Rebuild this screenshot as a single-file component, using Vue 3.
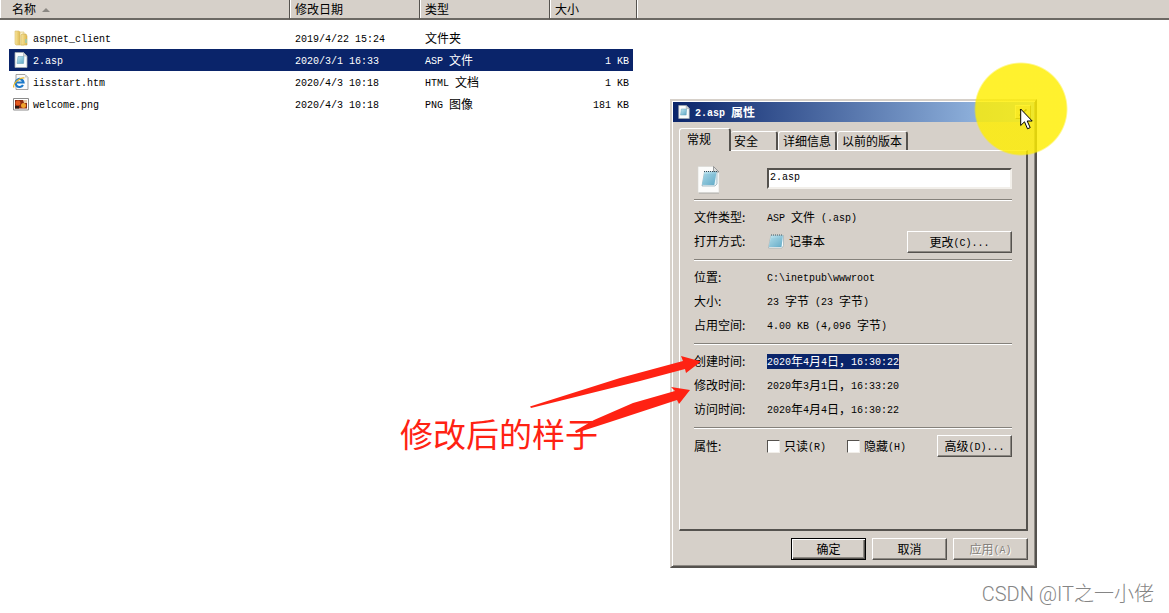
<script setup>
import { h, ref } from 'vue'

// Splits mixed text so Latin runs can be set half as wide as the ideographs.
const Mixed = (props) =>
  h(
    'span',
    { class: 'mixed' },
    (props.text.match(/[\x20-\x7e]+|[^\x20-\x7e]+/g) || []).map((run) =>
      /^[\x20-\x7e]/.test(run) ? h('span', { class: 'latin' }, run) : run
    )
  )
Mixed.props = ['text']

const files = [
  { icon: 'folder', name: 'aspnet_client', date: '2019/4/22 15:24', type: '文件夹', size: '' },
  { icon: 'note', name: '2.asp', date: '2020/3/1 16:33', type: 'ASP 文件', size: '1 KB', selected: true },
  { icon: 'ie', name: 'iisstart.htm', date: '2020/4/3 10:18', type: 'HTML 文档', size: '1 KB' },
  { icon: 'image', name: 'welcome.png', date: '2020/4/3 10:18', type: 'PNG 图像', size: '181 KB' },
]

const tabs = ['常规', '安全', '详细信息', '以前的版本']

const location = [
  ['位置:', 'C:\\inetpub\\wwwroot'],
  ['大小:', '23 字节 (23 字节)'],
  ['占用空间:', '4.00 KB (4,096 字节)'],
]
const times = [
  ['创建时间:', '2020年4月4日，16:30:22', true],
  ['修改时间:', '2020年3月1日，16:33:20'],
  ['访问时间:', '2020年4月4日，16:30:22'],
]

const fileName = ref('2.asp')
const readOnly = ref(false)
const hidden = ref(false)
</script>

<template>
  <main class="desktop">
    <svg class="defs" aria-hidden="true">
      <defs>
        <linearGradient id="pad" x1="0" y1="0" x2="1" y2="1">
          <stop offset="0" stop-color="#c4e8f2" />
          <stop offset="1" stop-color="#5ba6c4" />
        </linearGradient>
        <linearGradient id="gold" x1="0" y1="0" x2="1" y2="0">
          <stop offset="0" stop-color="#f8e6a0" />
          <stop offset="1" stop-color="#dfb94f" />
        </linearGradient>
      </defs>
      <symbol id="folder" viewBox="0 0 16 16">
        <path d="M2 1h4l1 1v13H3l-1-1z" fill="url(#gold)" stroke="#d9bd68" stroke-width=".6" />
        <path d="M7 2h4v13H7z" fill="#fbf3cf" stroke="#d9bd68" stroke-width=".6" />
        <path d="M9 4h4l1 2v9H8V5z" fill="url(#gold)" stroke="#cfae52" stroke-width=".6" />
        <path d="M12 9h2v4h-2z" fill="#a9c9a0" />
      </symbol>
      <symbol id="note" viewBox="0 0 16 16">
        <path d="M2 .5h8.500L14 4v11.500H2z" fill="#fafcfc" stroke="#a5adb0" stroke-width=".8" />
        <path d="M10.500.5V4H14z" fill="#d5dadd" stroke="#9ba3a8" stroke-width=".6" />
        <path d="M5 4.500h6l-.5 7H4z" fill="url(#pad)" stroke="#5f9db5" stroke-width=".5" />
      </symbol>
      <symbol id="ie" viewBox="0 0 16 16">
        <path d="M3 .5h9L15 3.500v12H3z" fill="#fafafa" stroke="#8c8c8c" stroke-width=".8" />
        <path d="M12 .5v3h3z" fill="#ccc" />
        <path d="M10 11A4 4 0 1 1 10.500 8.500H3.500" fill="none" stroke="#1b78c8" stroke-width="2.200" />
        <path d="M1 13.500C-1 10 7 3 11.500 4" fill="none" stroke="#e8b72c" stroke-width="1.200" />
      </symbol>
      <symbol id="image" viewBox="0 0 16 16">
        <path d="M.5 2.500h15v11.500H.5z" fill="#fff" stroke="#8b8b8b" />
        <path d="M2 4h12v8.500H2z" fill="#8e2a10" />
        <circle cx="5" cy="7" r="2.500" fill="#e4581c" />
        <circle cx="10.500" cy="9.500" r="2.500" fill="#f0a32c" />
        <path d="M10 4h4v3h-3z" fill="#e9c8a4" />
        <path d="M2 10h4v2.500H2z" fill="#2d1712" />
      </symbol>
      <symbol id="pad-icon" viewBox="0 0 16 16">
        <path d="M3 2.500h12.500v10L14 15H.5z" fill="#f5fafb" stroke="#8fa5ad" stroke-width=".6" />
        <path d="M3 2.500h12l-1.500 11.500H.8z" fill="url(#pad)" />
        <path d="M3 6h11M2.500 8h11M2 10h11.500M1.500 12H13" stroke="#82bfd2" stroke-width=".5" />
        <path d="M3 2h12" stroke="#3e5a66" stroke-dasharray="1 1" />
      </symbol>
      <symbol id="document" viewBox="0 0 24 28">
        <path d="M2 1h15l5 5v21.500H2z" fill="#a8a8a6" />
        <path d="M1 .5h15.500L22 6v20.500H1z" fill="#fcfcfb" stroke="#d6d6d4" stroke-width=".6" />
        <path d="M16.500.5V6H22z" fill="#dededc" stroke="#77797a" stroke-width=".7" />
        <path d="M7.500 6H20v12l-2 2H5z" fill="#e7f3f7" stroke="#7798a4" stroke-width=".6" />
        <path d="M7.500 6h12l-2.200 13H5z" fill="url(#pad)" />
        <path d="M7 9h12M6.700 11h12M6.300 13h12M6 15h12M5.500 17h12" stroke="#70b6d0" stroke-width=".6" />
        <path d="M7 5.500h13" stroke="#304e5b" stroke-dasharray="1 1" />
      </symbol>
    </svg>

    <table class="files">
      <colgroup>
        <col class="c-name" /><col class="c-mid" /><col class="c-mid" /><col class="c-size" /><col />
      </colgroup>
      <thead>
        <tr>
          <th class="first">名称 <i class="sort"></i></th>
          <th>修改日期</th>
          <th>类型</th>
          <th>大小</th>
          <th class="rest"></th>
        </tr>
      </thead>
      <tbody>
        <tr v-for="f in files" :key="f.name" :class="{ selected: f.selected }">
          <td class="first">
            <div class="cell name">
              <svg class="icon16"><use :href="'#' + f.icon" /></svg>
              <Mixed :text="f.name" />
            </div>
          </td>
          <td><div class="cell"><Mixed :text="f.date" /></div></td>
          <td><div class="cell"><Mixed :text="f.type" /></div></td>
          <td class="last"><div class="cell size"><Mixed :text="f.size" /></div></td>
          <td></td>
        </tr>
      </tbody>
    </table>

    <section class="dialog" role="dialog" aria-label="2.asp 属性">
      <header class="title">
        <svg class="icon14"><use href="#note" /></svg>
        <h1><Mixed text="2.asp 属性" /></h1>
        <button class="close" aria-label="关闭">
          <svg viewBox="0 0 8 7"><path d="M.5.5l7 6M7.500.5l-7 6" stroke="#000" stroke-width="1.500" /></svg>
        </button>
      </header>

      <div class="tabs" role="tablist">
        <button v-for="(t, i) in tabs" :key="t" class="tab" :class="{ active: i === 0 }" role="tab" :aria-selected="i === 0">{{ t }}</button>
      </div>

      <div class="panel">
        <div class="row head">
          <span class="key"><svg class="doc"><use href="#document" /></svg></span>
          <input v-model="fileName" class="field" type="text" aria-label="文件名" />
        </div>
        <hr />
        <div class="row"><span class="key">文件类型:</span><Mixed text="ASP 文件 (.asp)" /></div>
        <div class="row">
          <span class="key">打开方式:</span>
          <svg class="icon16 app"><use href="#pad-icon" /></svg>
          <span>记事本</span>
          <button class="btn change"><Mixed text="更改(C)..." /></button>
        </div>
        <hr />
        <div v-for="[k, v] in location" :key="k" class="row"><span class="key">{{ k }}</span><Mixed :text="v" /></div>
        <hr />
        <div v-for="[k, v, marked] in times" :key="k" class="row">
          <span class="key">{{ k }}</span><Mixed :class="{ marked }" :text="v" />
        </div>
        <hr />
        <div class="row attrs">
          <span class="key">属性:</span>
          <label class="check"><input v-model="readOnly" type="checkbox" /><Mixed text="只读(R)" /></label>
          <label class="check"><input v-model="hidden" type="checkbox" /><Mixed text="隐藏(H)" /></label>
          <button class="btn advanced"><Mixed text="高级(D)..." /></button>
        </div>
      </div>

      <footer class="actions">
        <button class="btn default">确定</button>
        <button class="btn">取消</button>
        <button class="btn" disabled><Mixed text="应用(A)" /></button>
      </footer>
    </section>

    <div class="spot"></div>
    <svg class="pointer" viewBox="0 0 13 22">
      <path d="M.7 1v16.500l3.800-3.700 3 7 2.700-1.200-3-6.600h5z" fill="#fff" stroke="#000" />
    </svg>

    <p class="note">修改后的样子</p>
    <svg class="arrows" viewBox="0 0 172 80">
      <path d="M0 50.500L90 22 153 5l-2-5 20 5.500L156 17l-1-4-45 12L1 52z" />
      <path d="M45 75L64 64l39-17 42-12-4-4 19 3-11 14-2-4-67 22-34 11z" />
    </svg>
    <p class="watermark">CSDN @IT之一小佬</p>
  </main>
</template>

<style>
body {
  background: #fff;
}
.mixed {
  white-space: pre;
}
.latin {
  font-family: "Liberation Mono", monospace;
  font-size: 10px;
  line-height: 12px;
  vertical-align: 1px;
}
</style>

<style scoped>
.desktop {
  position: relative;
  min-height: 100vh;
  overflow: hidden;
  font: 12px/14px "Noto Sans CJK SC", sans-serif;
  color: #000;
}
.defs {
  position: absolute;
  width: 0;
  height: 0;
}
.files {
  width: 100%;
  table-layout: fixed;
  border-collapse: separate;
  border-spacing: 0;
}
.c-name { width: 290px; }
.c-mid { width: 130px; }
.c-size { width: 87px; }
th {
  height: 18px;
  padding: 0 0 0 5px;
  text-align: left;
  font-weight: 400;
  background: #d6d0c9;
  border-right: 1px solid #55524e;
  border-bottom: 2px solid #6c6964;
  box-shadow: inset 1px 0 #fff;
}
th.first { padding-left: 12px; }
th.rest { border-right: 0; }
.sort {
  display: inline-block;
  margin: 0 0 2px 3px;
  border: 4px solid transparent;
  border-top: 0;
  border-bottom-color: #8b8883;
}
td { padding: 0; }
td.first { padding-left: 9px; }
td.last { padding-right: 4px; }
tbody tr:first-child td { padding-top: 7px; }
.cell {
  display: flex;
  align-items: center;
  height: 22px;
  padding-left: 5px;
}
.cell.name {
  gap: 4px;
  padding-left: 4px;
}
.cell.size {
  justify-content: flex-end;
  padding-right: 4px;
}
.selected .cell {
  background: #0a246a;
  color: #fff;
}
.icon16 {
  flex: none;
  width: 16px;
  height: 16px;
}
.icon14 {
  width: 14px;
  height: 14px;
}
.dialog {
  position: absolute;
  left: 670px;
  top: 99px;
  box-sizing: border-box;
  width: 367px;
  padding: 1px 7px 6px 7px;
  background: #d6d0c9;
  border: 2px solid;
  border-color: #d6d0c9 #55524e #55524e #d6d0c9;
  box-shadow: inset 1px 1px #fff, inset -1px -1px #8d8983;
}
.title {
  display: flex;
  align-items: center;
  gap: 4px;
  height: 20px;
  margin: 0 -6px;
  padding: 0 3px 0 4px;
  background: linear-gradient(90deg, #0a246a, #a6caf0);
  color: #fff;
}
.title h1 {
  margin: 0;
  font-size: 12px;
  line-height: 14px;
}
.close {
  display: grid;
  place-items: center;
  width: 16px;
  height: 14px;
  margin-left: auto;
  padding: 0;
  background: #d6d0c9;
  border: 1px solid;
  border-color: #fff #55524e #55524e #fff;
}
.close svg {
  width: 8px;
  height: 7px;
}
.tabs {
  display: flex;
  align-items: flex-end;
  margin-top: 6px;
}
.tab {
  height: 19px;
  padding: 0 4px;
  font: inherit;
  color: inherit;
  background: #d6d0c9;
  border: 1px solid #fff;
  border-right: 2px solid #55524e;
  border-bottom: 0;
  border-radius: 3px 3px 0 0;
}
.tab.active {
  position: relative;
  width: 52px;
  height: 23px;
  margin-bottom: -1px;
  padding: 0 0 2px 7px;
  text-align: left;
}
.tab:nth-child(2) {
  width: 47px;
  padding-left: 3px;
  text-align: left;
  border-left: 0;
}
.panel {
  padding: 15px 14px 70px;
  border: 1px solid #fff;
  border-right: 2px solid #55524e;
  border-bottom: 2px solid #55524e;
}
.row {
  display: flex;
  align-items: center;
  height: 24px;
}
.row.head { height: 27px; }
.key {
  flex: none;
  width: 73px;
}
.doc {
  display: block;
  width: 24px;
  height: 28px;
  margin-left: 3px;
}
.field {
  flex: 1;
  box-sizing: border-box;
  min-width: 0;
  height: 21px;
  margin-bottom: 2px;
  padding: 0 1px 2px;
  font: 10px/14px "Liberation Mono", monospace;
  background: #fff;
  border: 2px solid;
  border-color: #55524e #f2efea #f2efea #55524e;
  border-radius: 0;
  outline: 0;
}
hr {
  height: 0;
  margin: 6px 0 4px;
  border: 0;
  border-top: 1px solid #85817b;
  border-bottom: 1px solid #fff;
}
.app { margin: 0 5px 0 1px; }
.marked {
  line-height: 13px;
  background: #0a246a;
  color: #fff;
}
.btn {
  box-sizing: border-box;
  width: 75px;
  height: 22px;
  padding: 0;
  font: inherit;
  color: inherit;
  background: #d6d0c9;
  border: 1px solid;
  border-color: #fff #55524e #55524e #fff;
  box-shadow: inset -1px -1px #8d8983;
}
.btn.change {
  width: 105px;
  margin-left: auto;
  align-self: flex-end;
}
.btn.advanced { margin-left: auto; }
.btn.default {
  border-color: #000;
  box-shadow: inset 1px 1px #fff, inset -1px -1px #55524e, inset -2px -2px #8d8983;
}
.btn:disabled {
  color: #85817b;
  text-shadow: 1px 1px #fff;
}
.attrs { height: 26px; }
.check {
  display: flex;
  align-items: center;
  gap: 4px;
  width: 80px;
}
.check input {
  appearance: none;
  flex: none;
  box-sizing: border-box;
  width: 13px;
  height: 13px;
  margin: 0;
  background: #fff;
  border: 1px solid;
  border-color: #55524e #f2efea #f2efea #55524e;
}
.check input:checked { background: #0a246a; }
.actions {
  display: flex;
  justify-content: flex-end;
  gap: 6px;
  margin-top: 7px;
}
.spot {
  position: absolute;
  left: 974px;
  top: 62px;
  width: 94px;
  height: 94px;
  border-radius: 50%;
  background: radial-gradient(closest-side, rgba(255, 238, 0, 0.82) 96%, rgba(255, 238, 0, 0));
}
.pointer {
  position: absolute;
  left: 1020px;
  top: 108px;
  width: 13px;
  height: 22px;
}
.note {
  position: absolute;
  left: 400px;
  top: 413px;
  margin: 0;
  font-size: 33px;
  line-height: 40px;
  color: #ff2213;
  white-space: nowrap;
}
.arrows {
  position: absolute;
  left: 530px;
  top: 356px;
  width: 172px;
  height: 80px;
  fill: #ff2213;
}
.watermark {
  position: absolute;
  right: 15px;
  bottom: 6px;
  margin: 0;
  font: 300 20px/26px Roboto, "Noto Sans CJK SC", sans-serif;
  color: #858585;
  white-space: nowrap;
}
</style>
